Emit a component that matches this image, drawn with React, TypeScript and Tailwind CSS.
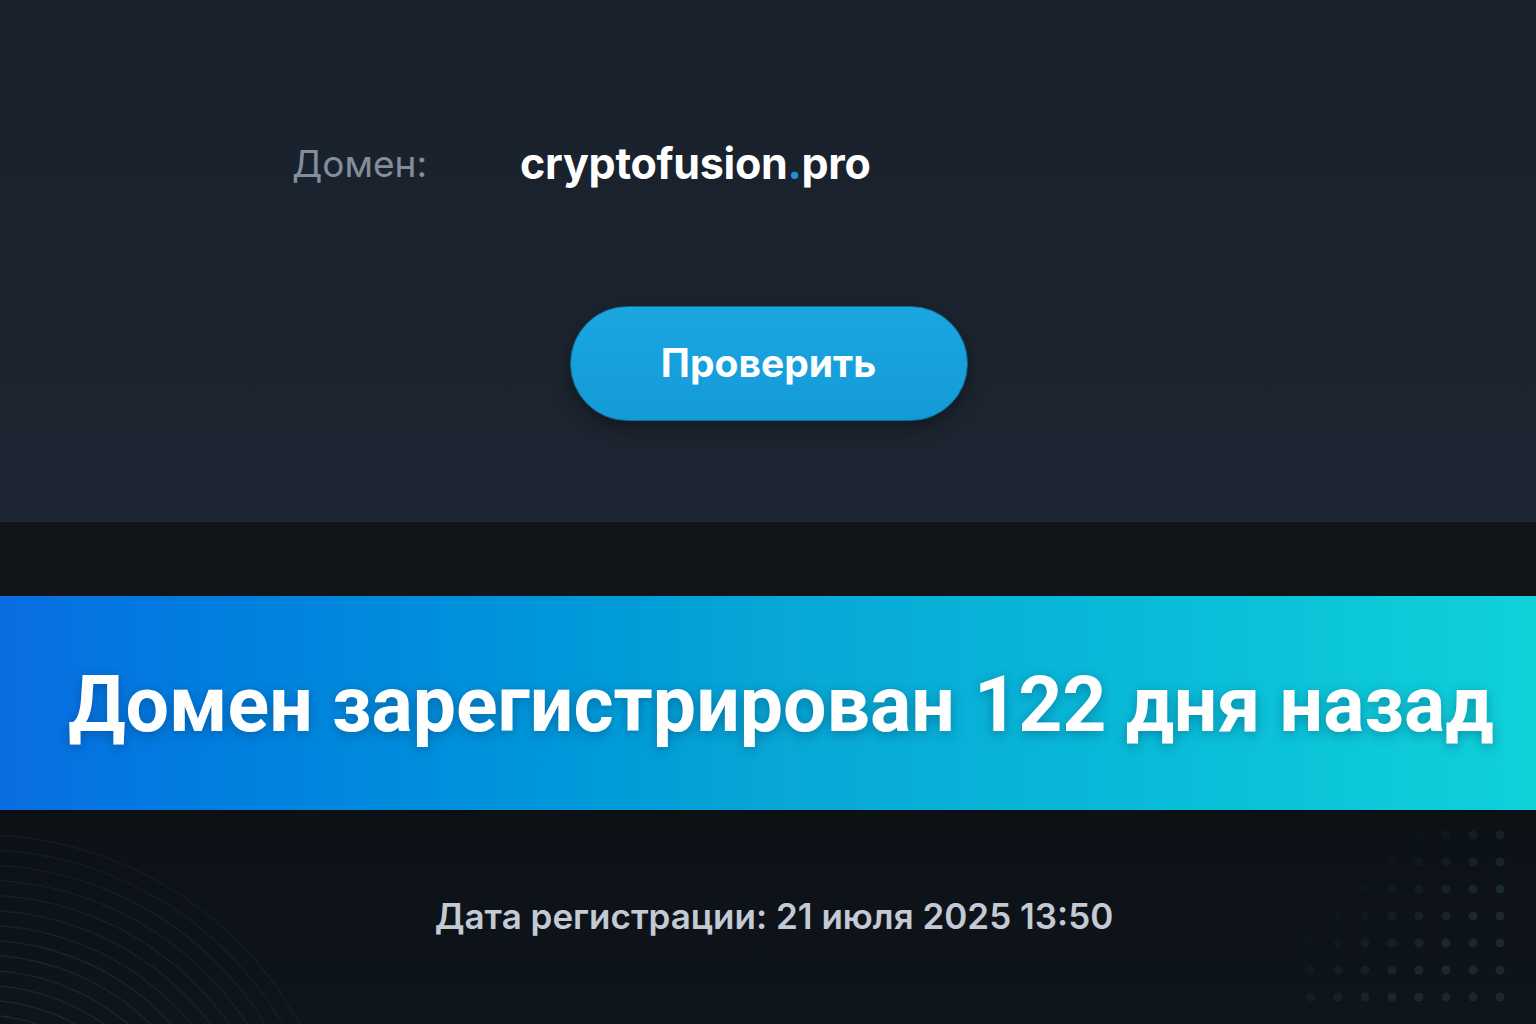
import React from "react";

const font = { fontFamily: "Inter, 'Noto Sans', sans-serif" };

function Arcs() {
  const radii = Array.from({ length: 20 }, (_, i) => 365 - i * 15);
  return (
    <svg className="pointer-events-none absolute left-0 bottom-0" width="420" height="214" viewBox="0 810 420 214">
      {radii.map((r, i) => (
        <circle key={r} cx={-20} cy={1200} r={r} fill="none" stroke="#22303d" strokeWidth="1.4" opacity={0.35 + i * 0.03} />
      ))}
    </svg>
  );
}

function Dots() {
  const dots: { x: number; y: number; o: number }[] = [];
  for (let row = 0; row < 7; row++) {
    for (let col = 0; col < 8; col++) {
      const x = 1311 + col * 27;
      const y = 835 + row * 27;
      const vis = col + row;
      if (vis < 4) continue;
      dots.push({ x, y, o: Math.min(1, (vis - 3) / 6) });
    }
  }
  return (
    <svg className="pointer-events-none absolute right-0 bottom-0" width="236" height="214" viewBox="1300 810 236 214">
      {dots.map((d, i) => (
        <circle key={i} cx={d.x} cy={d.y} r="4.5" fill="#192833" opacity={d.o} />
      ))}
    </svg>
  );
}

export default function App() {
  return (
    <div className="w-[1536px] h-[1024px] overflow-hidden flex flex-col bg-[#0e1419]" style={font}>
      <section className="h-[521px] bg-gradient-to-b from-[#19212b] to-[#1c2531] flex flex-col items-center">
        <div className="mt-[142px] w-full flex items-center pl-[292px] gap-[93px]">
          <span className="text-[37px] text-[#838e9c] font-normal leading-none">Домен:</span>
          <span className="text-[43px] text-white font-bold leading-none tracking-[-0.3px]">
            cryptofusion<span className="text-[#1e8fe0]">.</span>pro
          </span>
        </div>
        <button
          type="button"
          className="mt-[121px] ml-[1px] w-[398px] h-[115px] rounded-full bg-gradient-to-b from-[#1ba6e0] to-[#139bd8] text-white text-[39px] font-bold shadow-[0_6px_18px_rgba(0,0,0,0.35)] border border-[#0d6e9c]"
        >
          Проверить
        </button>
      </section>
      <div className="h-[75px] bg-[#111519] border-t border-[#222b35]" />
      <section className="h-[214px] bg-gradient-to-r from-[#0a6de2] via-[#08a6d6] to-[#10d1da] flex items-center justify-center">
        <h1
          className="text-[77px] font-bold text-white leading-none ml-[26px] mt-[4px] drop-shadow-[0_3px_6px_rgba(0,40,80,0.35)]"
          style={{ fontFamily: "Roboto, 'Noto Sans', sans-serif" }}
        >
          Домен зарегистрирован 122 дня назад
        </h1>
      </section>
      <section className="relative flex-1 bg-gradient-to-b from-[#0c1116] to-[#0e151b] border-t-2 border-[#0a0e12] flex items-center justify-center">
        <Arcs />
        <Dots />
        <p className="relative text-[35px] font-semibold text-[#c3cad3] leading-none ml-[12px] -mt-[4px]">
          Дата регистрации: 21 июля 2025 13:50
        </p>
      </section>
    </div>
  );
}
